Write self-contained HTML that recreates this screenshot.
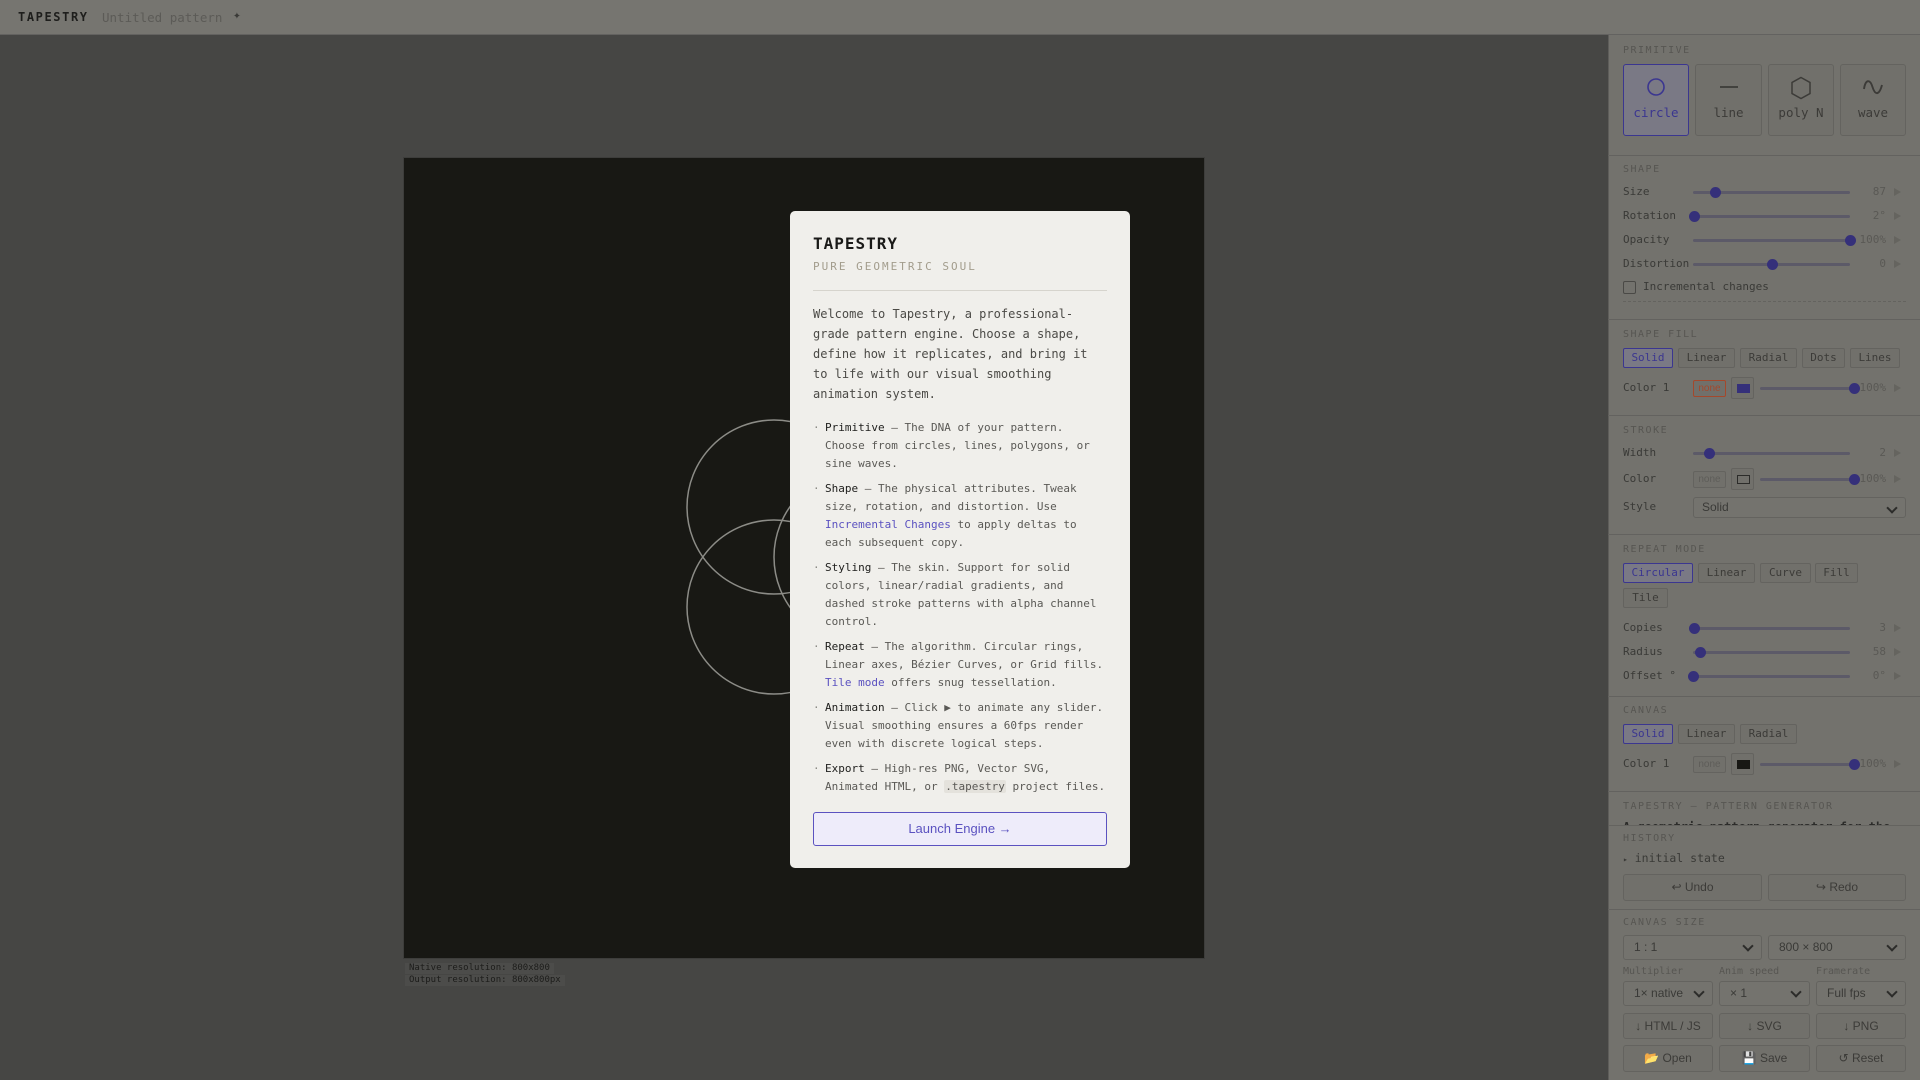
<!DOCTYPE html>
<html><head><meta charset="utf-8"><style>
*{box-sizing:border-box;margin:0;padding:0}
body{width:1920px;height:1080px;background:#464644;position:relative;overflow:hidden;font-family:"DejaVu Sans Mono","Liberation Mono",monospace}
.a{position:absolute}
.top{left:0;top:0;width:1920px;height:35px;background:#767570;border-bottom:1px solid #636260}
.panel{left:1608px;top:35px;width:312px;height:1045px;background:#73726d;border-left:1px solid #5e5d5a}
.sep{position:absolute;left:1608px;width:312px;height:1px;background:#63625f}
.st{position:absolute;left:1623px;font-size:10px;letter-spacing:1.5px;color:#575652;line-height:12px}
.lb{position:absolute;left:1623px;font-size:11px;color:#3a3a37;line-height:14px}
.tr{position:absolute;height:3px;background:#5c5a68;border-radius:2px}
.th{position:absolute;width:11px;height:11px;border-radius:50%;background:#35307a}
.v{position:absolute;width:60px;text-align:right;font-size:11px;color:#5a5955;line-height:14px}
.ar{position:absolute;width:0;height:0;border-left:7px solid #65645f;border-top:4.5px solid transparent;border-bottom:4.5px solid transparent}
.b{position:absolute;height:20px;border:1px solid #64635f;border-radius:2px;background:#71706b;font-size:11px;color:#3c3b38;text-align:center;line-height:18px}
.b.on{border-color:#3b3690;background:#7a7985;color:#3b3690}
.pb{position:absolute;top:64px;height:72px;border:1px solid #64635f;border-radius:3px;background:#71706b;text-align:center;color:#3c3b38;font-size:12.5px}
.pb.on{border-color:#3b3690;background:#7a7985;color:#3b3690}
.pb svg{margin-top:11px;display:block;margin-left:auto;margin-right:auto}
.pb div{margin-top:7px}
.sel{position:absolute;border:1px solid #64635f;border-radius:3px;background:#74736e;font-family:"Liberation Sans","DejaVu Sans",sans-serif;font-size:12px;color:#3a3a37;padding-left:10px;line-height:22px}
.sel:after{content:"";position:absolute;right:9px;top:6px;width:6px;height:6px;border-right:2px solid #2c2c2a;border-bottom:2px solid #2c2c2a;transform:rotate(45deg)}
.hb{position:absolute;border:1px solid #64635f;border-radius:3px;background:#71706b;font-family:"Liberation Sans","DejaVu Sans",sans-serif;font-size:12px;color:#3c3b38;text-align:center}
.none{position:absolute;width:33px;height:17px;border:1px solid #64635f;border-radius:2px;font-family:"Liberation Sans",sans-serif;font-size:10px;color:#5e5d59;text-align:center;line-height:15px;background:#71706b}
.sw{position:absolute;width:23px;height:22px;border:1px solid #64635f;border-radius:2px;background:#71706b}
.sw i{position:absolute;left:5px;top:6px;width:13px;height:9px}
.modal{left:790px;top:211px;width:340px;height:657px;background:#f0efeb;border-radius:5px;padding:23px 23px 23px 23px}
.li{position:relative;padding-left:12px;font-size:11px;line-height:18px;color:#5a5955;margin-bottom:7px;width:294px}
.li:before{content:"·";position:absolute;left:0;color:#8a8984}
.li b{font-weight:normal;color:#1e1e1c}
.lk{color:#5b52c0}
</style></head><body>
<div class="a top"></div>
<div class="a" style="left:18px;top:10px;font-size:12px;font-weight:bold;letter-spacing:1.6px;color:#1e1e1c">TAPESTRY</div>
<div class="a" style="left:102px;top:10px;font-size:12.5px;color:#5c5b57">Untitled pattern</div>
<div class="a" style="left:233px;top:8px;font-size:13px;color:#3a3a37">✦</div>

<!-- canvas -->
<div class="a" style="left:403px;top:157px;width:802px;height:802px;background:#181814;border:1px solid #3d3d3b"></div>
<svg class="a" style="left:0;top:0" width="1920" height="1080"><g fill="none" stroke="#8c8c87" stroke-width="1.5"><circle cx="774" cy="507" r="87"/><circle cx="774" cy="607" r="87"/><circle cx="861" cy="557" r="87"/></g></svg>
<div class="a" style="left:405px;top:963px;font-size:9px;line-height:11px;color:#1c1c1a;background:#4c4c4a;padding:0 4px">Native resolution: 800x800</div>
<div class="a" style="left:405px;top:975px;font-size:9px;line-height:11px;color:#1c1c1a;background:#4c4c4a;padding:0 4px">Output resolution: 800x800px</div>

<!-- modal -->
<div class="a modal">
<div style="font-size:16px;font-weight:bold;letter-spacing:1px;color:#1a1a18;line-height:20px">TAPESTRY</div>
<div style="font-size:11px;letter-spacing:2px;color:#a29c8c;margin-top:6px;line-height:14px">PURE GEOMETRIC SOUL</div>
<div style="height:1px;background:#d6d4cd;margin:16px 0 13px 0"></div>
<div style="font-size:12px;line-height:20px;color:#4b4a46;margin-bottom:15px">Welcome to Tapestry, a professional-grade pattern engine. Choose a shape, define how it replicates, and bring it to life with our visual smoothing animation system.</div>
<div class="li"><b>Primitive</b> — The DNA of your pattern. Choose from circles, lines, polygons, or sine waves.</div>
<div class="li"><b>Shape</b> — The physical attributes. Tweak size, rotation, and distortion. Use <span class="lk">Incremental Changes</span> to apply deltas to each subsequent copy.</div>
<div class="li"><b>Styling</b> — The skin. Support for solid colors, linear/radial gradients, and dashed stroke patterns with alpha channel control.</div>
<div class="li"><b>Repeat</b> — The algorithm. Circular rings, Linear axes, Bézier Curves, or Grid fills. <span class="lk">Tile mode</span> offers snug tessellation.</div>
<div class="li"><b>Animation</b> — Click ▶ to animate any slider. Visual smoothing ensures a 60fps render even with discrete logical steps.</div>
<div class="li"><b>Export</b> — High-res PNG, Vector SVG, <span style="white-space:nowrap">Animated HTML, or <span style="background:#e4e2dc;padding:0 1px;border-radius:2px">.tapestry</span> project files.</span></div>
<div style="margin-top:16px;height:34px;border:1px solid #5b52c0;border-radius:3px;background:#eeecfa;color:#5b52c0;font-family:'Liberation Sans',sans-serif;font-size:13px;text-align:center;line-height:32px">Launch Engine →</div>
</div>

<!-- panel -->
<div class="a panel"></div>
<div class="st" style="top:45px">PRIMITIVE</div>
<div class="pb on" style="left:1623px;width:66px"><svg width="22" height="22" viewBox="0 0 22 22"><circle cx="11" cy="11" r="8" fill="none" stroke="#3b3690" stroke-width="1.6"/></svg><div>circle</div></div>
<div class="pb" style="left:1695px;width:67px"><svg width="22" height="22" viewBox="0 0 22 22"><line x1="2" y1="11" x2="20" y2="11" stroke="#3c3b38" stroke-width="1.8"/></svg><div>line</div></div>
<div class="pb" style="left:1768px;width:66px"><svg width="22" height="24" viewBox="0 0 22 24"><polygon points="11,1.5 20,6.5 20,17.5 11,22.5 2,17.5 2,6.5" fill="none" stroke="#3c3b38" stroke-width="1.5"/></svg><div style="margin-top:5px">poly N</div></div>
<div class="pb" style="left:1840px;width:66px"><svg width="22" height="22" viewBox="0 0 22 22"><path d="M2 13 C3.5 3,8 3,10.5 11 S17 20,20 9" fill="none" stroke="#3c3b38" stroke-width="1.9"/></svg><div>wave</div></div>
<div class="sep" style="top:155px"></div>

<div class="st" style="top:164px">SHAPE</div>
<div class="lb" style="top:185px">Size</div><div class="tr" style="left:1693px;width:157px;top:191px"></div><div class="th" style="left:1710px;top:187px"></div><div class="v" style="left:1826px;top:185px">87</div><div class="ar" style="left:1894px;top:188px"></div>
<div class="lb" style="top:209px">Rotation</div><div class="tr" style="left:1693px;width:157px;top:215px"></div><div class="th" style="left:1689px;top:211px"></div><div class="v" style="left:1826px;top:209px">2°</div><div class="ar" style="left:1894px;top:212px"></div>
<div class="lb" style="top:233px">Opacity</div><div class="tr" style="left:1693px;width:157px;top:239px"></div><div class="th" style="left:1845px;top:235px"></div><div class="v" style="left:1826px;top:233px">100%</div><div class="ar" style="left:1894px;top:236px"></div>
<div class="lb" style="top:257px">Distortion</div><div class="tr" style="left:1693px;width:157px;top:263px"></div><div class="th" style="left:1767px;top:259px"></div><div class="v" style="left:1826px;top:257px">0</div><div class="ar" style="left:1894px;top:260px"></div>
<div class="a" style="left:1623px;top:281px;width:13px;height:13px;border:1px solid #4a4946;border-radius:2px"></div>
<div class="lb" style="left:1643px;top:280px">Incremental changes</div>
<div class="a" style="left:1623px;top:301px;width:283px;border-top:1px dashed #64635f"></div>
<div class="sep" style="top:319px"></div>

<div class="st" style="top:329px">SHAPE FILL</div>
<div class="b on" style="left:1623px;top:348px;width:50px">Solid</div>
<div class="b" style="left:1678px;top:348px;width:57px">Linear</div>
<div class="b" style="left:1740px;top:348px;width:57px">Radial</div>
<div class="b" style="left:1802px;top:348px;width:43px">Dots</div>
<div class="b" style="left:1850px;top:348px;width:50px">Lines</div>
<div class="lb" style="top:381px">Color 1</div>
<div class="none" style="left:1693px;top:380px;border-color:#a4482c;color:#a4482c">none</div>
<div class="sw" style="left:1731px;top:377px"><i style="background:#35307a"></i></div>
<div class="tr" style="left:1760px;width:93px;top:387px"></div><div class="th" style="left:1849px;top:383px"></div><div class="v" style="left:1826px;top:381px">100%</div><div class="ar" style="left:1894px;top:384px"></div>
<div class="sep" style="top:415px"></div>

<div class="st" style="top:425px">STROKE</div>
<div class="lb" style="top:446px">Width</div><div class="tr" style="left:1693px;width:157px;top:452px"></div><div class="th" style="left:1704px;top:448px"></div><div class="v" style="left:1826px;top:446px">2</div><div class="ar" style="left:1894px;top:449px"></div>
<div class="lb" style="top:472px">Color</div>
<div class="none" style="left:1693px;top:471px">none</div>
<div class="sw" style="left:1731px;top:468px"><i style="border:1px solid #2c2c2a"></i></div>
<div class="tr" style="left:1760px;width:93px;top:478px"></div><div class="th" style="left:1849px;top:474px"></div><div class="v" style="left:1826px;top:472px">100%</div><div class="ar" style="left:1894px;top:475px"></div>
<div class="lb" style="top:500px">Style</div>
<div class="sel" style="left:1693px;top:497px;width:213px;height:21px;line-height:19px;padding-left:8px">Solid</div>
<div class="sep" style="top:534px"></div>

<div class="st" style="top:544px">REPEAT MODE</div>
<div class="b on" style="left:1623px;top:563px;width:70px">Circular</div>
<div class="b" style="left:1698px;top:563px;width:57px">Linear</div>
<div class="b" style="left:1760px;top:563px;width:51px">Curve</div>
<div class="b" style="left:1815px;top:563px;width:43px">Fill</div>
<div class="b" style="left:1623px;top:588px;width:45px">Tile</div>
<div class="lb" style="top:621px">Copies</div><div class="tr" style="left:1693px;width:157px;top:627px"></div><div class="th" style="left:1689px;top:623px"></div><div class="v" style="left:1826px;top:621px">3</div><div class="ar" style="left:1894px;top:624px"></div>
<div class="lb" style="top:645px">Radius</div><div class="tr" style="left:1693px;width:157px;top:651px"></div><div class="th" style="left:1695px;top:647px"></div><div class="v" style="left:1826px;top:645px">58</div><div class="ar" style="left:1894px;top:648px"></div>
<div class="lb" style="top:669px">Offset °</div><div class="tr" style="left:1693px;width:157px;top:675px"></div><div class="th" style="left:1688px;top:671px"></div><div class="v" style="left:1826px;top:669px">0°</div><div class="ar" style="left:1894px;top:672px"></div>
<div class="sep" style="top:696px"></div>

<div class="st" style="top:705px">CANVAS</div>
<div class="b on" style="left:1623px;top:724px;width:50px">Solid</div>
<div class="b" style="left:1678px;top:724px;width:57px">Linear</div>
<div class="b" style="left:1740px;top:724px;width:57px">Radial</div>
<div class="lb" style="top:757px">Color 1</div>
<div class="none" style="left:1693px;top:756px">none</div>
<div class="sw" style="left:1731px;top:753px"><i style="background:#181814"></i></div>
<div class="tr" style="left:1760px;width:93px;top:763px"></div><div class="th" style="left:1849px;top:759px"></div><div class="v" style="left:1826px;top:757px">100%</div><div class="ar" style="left:1894px;top:760px"></div>
<div class="sep" style="top:791px"></div>
<div class="st" style="top:801px">TAPESTRY — PATTERN GENERATOR</div>
<div class="a" style="left:1623px;top:820px;font-size:12px;color:#2c2c2a;font-weight:bold;white-space:nowrap">A geometric pattern generator for the</div>

<!-- history -->
<div class="a" style="left:1609px;top:825px;width:311px;height:255px;background:#73726d;border-top:1px solid #64635f"></div>
<div class="st" style="top:833px">HISTORY</div>
<div class="lb" style="top:851px;font-size:11.5px"><span style="font-size:8px">▸</span> initial state</div>
<div class="hb" style="left:1623px;top:874px;width:139px;height:27px;line-height:25px">↩ Undo</div>
<div class="hb" style="left:1768px;top:874px;width:138px;height:27px;line-height:25px">↪ Redo</div>
<div class="sep" style="top:909px"></div>
<div class="st" style="top:917px">CANVAS SIZE</div>
<div class="sel" style="left:1623px;top:935px;width:139px;height:25px">1 : 1</div>
<div class="sel" style="left:1768px;top:935px;width:138px;height:25px">800 × 800</div>
<div class="lb" style="top:965px;font-size:10px;color:#575652">Multiplier</div>
<div class="lb" style="left:1719px;top:965px;font-size:10px;color:#575652">Anim speed</div>
<div class="lb" style="left:1816px;top:965px;font-size:10px;color:#575652">Framerate</div>
<div class="sel" style="left:1623px;top:981px;width:90px;height:25px">1× native</div>
<div class="sel" style="left:1719px;top:981px;width:91px;height:25px">× 1</div>
<div class="sel" style="left:1816px;top:981px;width:90px;height:25px">Full fps</div>
<div class="hb" style="left:1623px;top:1013px;width:90px;height:26px;line-height:24px">↓ HTML / JS</div>
<div class="hb" style="left:1719px;top:1013px;width:91px;height:26px;line-height:24px">↓ SVG</div>
<div class="hb" style="left:1816px;top:1013px;width:90px;height:26px;line-height:24px">↓ PNG</div>
<div class="hb" style="left:1623px;top:1045px;width:90px;height:27px;line-height:25px">📂 Open</div>
<div class="hb" style="left:1719px;top:1045px;width:91px;height:27px;line-height:25px">💾 Save</div>
<div class="hb" style="left:1816px;top:1045px;width:90px;height:27px;line-height:25px">↺ Reset</div>
</body></html>
